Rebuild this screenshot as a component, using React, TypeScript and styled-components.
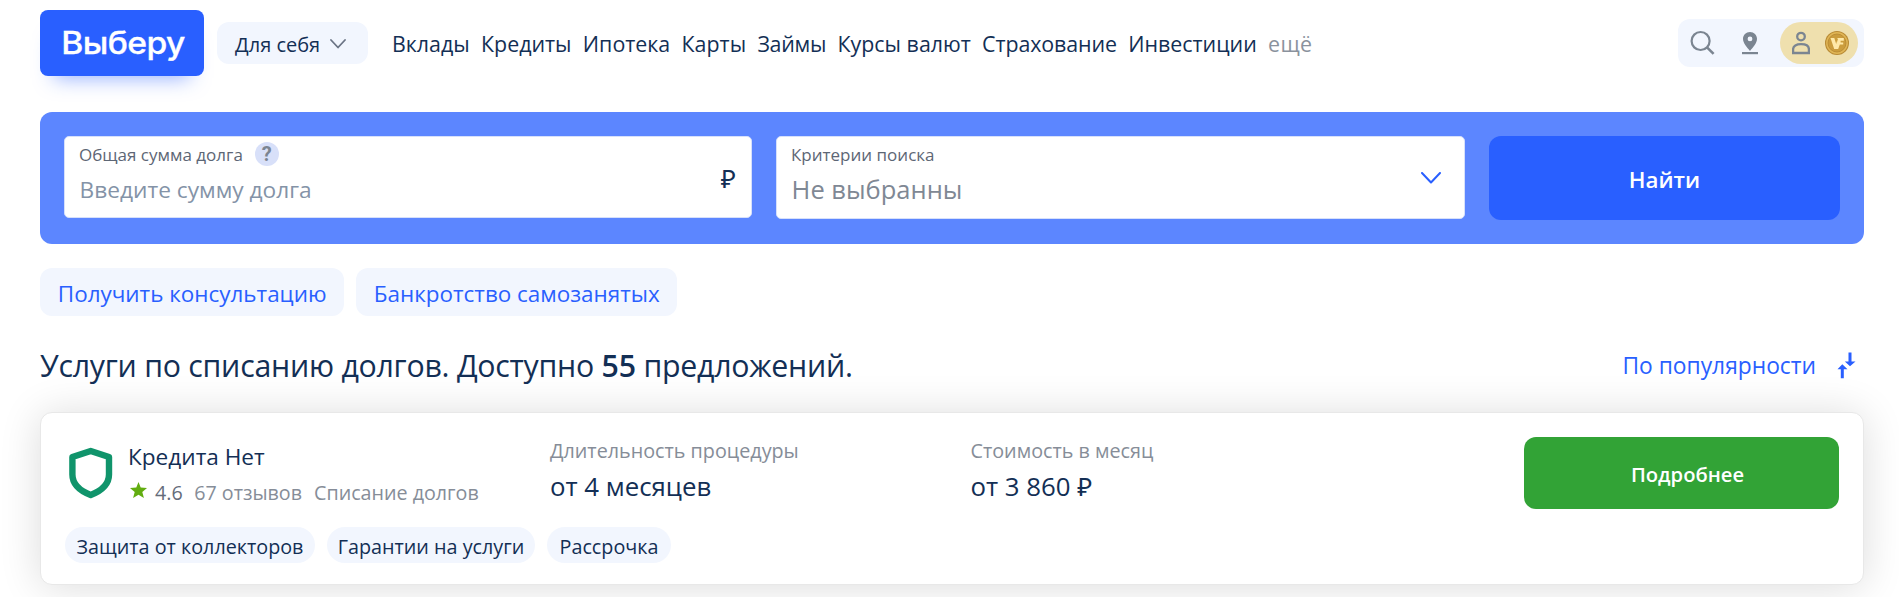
import React from 'react';
import styled, { createGlobalStyle } from 'styled-components';

const GlobalStyle = createGlobalStyle`
  *, *::before, *::after { box-sizing: border-box; }
  html, body { margin: 0; background: #fff; overflow: hidden; }
  body { font-family: "Open Sans", "Noto Sans", sans-serif; color: #132f55; }
  button { font-family: inherit; border: 0; cursor: pointer; }
  a { text-decoration: none; color: inherit; }
  svg { display: block; flex: none; }
`;

const Page = styled.div`
  height: 597px;
  padding: 10px 35px 0 40px;
  overflow: hidden;
`;

const Header = styled.header`
  display: flex;
  align-items: flex-start;
  width: 1824px;
  height: 102px;
`;

const Logo = styled.a`
  display: flex;
  align-items: center;
  justify-content: center;
  width: 164px;
  height: 66px;
  border-radius: 8px;
  background: #295fff;
  box-shadow: 0 16px 20px -14px rgba(41, 95, 255, 0.5);
  color: #fff;
`;

const LogoText = styled.span`
  font: 500 31px/40px Inter, sans-serif;
  letter-spacing: -0.5px;
  -webkit-text-stroke: 0.3px #fff;
  transform: scaleX(1.085);
  margin: -1px 0 0 2px;
`;

const Audience = styled.button`
  display: flex;
  align-items: center;
  gap: 10px;
  width: 151px;
  height: 42px;
  margin: 12px 0 0 13px;
  padding: 2px 0 0 18px;
  border-radius: 12px;
  background: #f2f6fe;
  color: #132f55;
  font-size: 20px;
`;

const Nav = styled.nav`
  display: flex;
  gap: 11.3px;
  margin: 14px 0 0 24px;
`;

const NavLink = styled.a<{ $muted?: boolean; $track?: number }>`
  font-size: 21.4px;
  line-height: 40px;
  white-space: nowrap;
  letter-spacing: ${(p) => p.$track ?? 0}px;
  color: ${(p) => (p.$muted ? '#8a929d' : '#132f55')};
`;

const UserTools = styled.div`
  display: flex;
  align-items: center;
  width: 186px;
  height: 48px;
  margin: 9px 0 0 auto;
  padding: 0 6px 0 12px;
  border-radius: 12px;
  background: #f2f6fe;
`;

const PinSlot = styled.span`
  margin-left: 26px;
`;

const Account = styled.div`
  display: flex;
  align-items: center;
  gap: 15px;
  width: 78px;
  height: 42px;
  margin-left: auto;
  padding-left: 12px;
  border-radius: 21px;
  background: #efe0ae;
`;

const SearchPanel = styled.section`
  display: flex;
  align-items: flex-start;
  gap: 24px;
  width: 1824px;
  height: 132px;
  padding: 24px;
  border-radius: 12px;
  background: #5c86ff;
`;

const Field = styled.div<{ $width: number; $height: number }>`
  display: flex;
  justify-content: space-between;
  align-items: center;
  width: ${(p) => p.$width}px;
  height: ${(p) => p.$height}px;
  border: 1px solid #d6e0fb;
  border-radius: 5px;
  background: #fff;
`;

const FieldBody = styled.div`
  align-self: flex-start;
  padding: 5px 0 0 14px;
`;

const FieldLabel = styled.div`
  display: flex;
  align-items: center;
  gap: 12px;
  height: 24px;
  font-size: 17px;
  color: #5d6675;
`;

const Help = styled.span`
  display: flex;
  align-items: center;
  justify-content: center;
  width: 24px;
  height: 24px;
  border-radius: 50%;
  background: #d8e0f9;
  color: #7b8591;
  font: 700 20px/24px Roboto, sans-serif;
`;

const FieldValue = styled.div<{ $size: number; $color: string; $top: number }>`
  margin-top: ${(p) => p.$top}px;
  padding-left: 0.6px;
  font-size: ${(p) => p.$size}px;
  line-height: 34px;
  color: ${(p) => p.$color};
`;

const Currency = styled.span`
  margin: 1px 15px 0 0;
  font-size: 26px;
  line-height: 34px;
`;

const ChevronSlot = styled.span`
  margin-right: 23px;
`;

const FindButton = styled.button`
  width: 351px;
  height: 84px;
  padding: 3px 0 0;
  border-radius: 12px;
  background: #295fff;
  color: #fff;
  font-size: 22.3px;
  font-weight: 600;
`;

const Shortcuts = styled.div`
  display: flex;
  gap: 12px;
  margin-top: 24px;
`;

const Shortcut = styled.a<{ $width: number }>`
  display: flex;
  align-items: center;
  width: ${(p) => p.$width}px;
  height: 48px;
  padding: 2px 0 0 17.8px;
  border-radius: 12px;
  background: #f2f6fe;
  color: #295fff;
  font-size: 22.45px;
  white-space: nowrap;
`;

const ListHeader = styled.div`
  display: flex;
  justify-content: space-between;
  align-items: center;
  width: 1824px;
  height: 40px;
  margin-top: 29px;
`;

const Title = styled.h1`
  margin: 1px 0 0;
  font-size: 30.3px;
  font-weight: 400;
  line-height: 40px;
  letter-spacing: -0.25px;

  b { font-weight: 600; }
`;

const Sort = styled.a`
  display: flex;
  align-items: center;
  gap: 21px;
  margin-right: 8px;
  color: #295fff;
  font-size: 22.8px;
`;

const Card = styled.article`
  width: 1824px;
  height: 173px;
  margin-top: 27px;
  padding: 24px;
  border: 1px solid #e8e8e8;
  border-radius: 12px;
  background: #fff;
  box-shadow: 0 2px 42px rgba(0, 0, 0, 0.14);
`;

const CardRow = styled.div`
  display: flex;
  align-items: flex-start;
  height: 90px;
`;

const Provider = styled.div`
  display: flex;
  gap: 15px;
  width: 485px;
  padding-left: 4px;
`;

const ShieldSlot = styled.span`
  padding-top: 10px;
`;

const ProviderInfo = styled.div`
  padding-top: 3px;
`;

const ProviderName = styled.div`
  font-size: 22.6px;
  line-height: 34px;
`;

const Rating = styled.div`
  display: flex;
  align-items: center;
  height: 30px;
  margin: 3px 0 0 2px;
  font-size: 19.7px;
  color: #868d98;
  white-space: nowrap;
`;

const Score = styled.span`
  margin: 0 11.5px 0 8px;
  color: #646c7a;
`;

const Reviews = styled.span`
  margin-right: 12px;
`;

const Term = styled.div`
  width: 420.5px;
`;

const TermLabel = styled.div`
  font-size: 19.75px;
  line-height: 27px;
  color: #868d98;
`;

const TermValue = styled.div`
  margin-top: 5px;
  font-size: 25.8px;
  line-height: 34px;
`;

const DetailsButton = styled.button`
  width: 315px;
  height: 72px;
  margin-left: auto;
  padding: 1px 0 0 12px;
  border-radius: 12px;
  background: #32a336;
  color: #fff;
  font-size: 20.2px;
  font-weight: 600;
`;

const Tags = styled.div`
  display: flex;
  gap: 12px;
`;

const Tag = styled.span<{ $width: number }>`
  display: flex;
  align-items: center;
  justify-content: center;
  width: ${(p) => p.$width}px;
  height: 36px;
  padding-top: 2px;
  border-radius: 18px;
  background: #f2f6fe;
  font-size: 19.75px;
  white-space: nowrap;
`;

const navItems: { label: string; track?: number; muted?: boolean }[] = [
  { label: 'Вклады' },
  { label: 'Кредиты' },
  { label: 'Ипотека' },
  { label: 'Карты' },
  { label: 'Займы', track: -0.25 },
  { label: 'Курсы валют' },
  { label: 'Страхование', track: -0.1 },
  { label: 'Инвестиции' },
  { label: 'ещё', muted: true, track: 0.3 },
];

const Chevron = ({ w, h, color, stroke }: { w: number; h: number; color: string; stroke: number }) => (
  <svg width={w} height={h} viewBox={`0 0 ${w} ${h}`} fill="none" stroke={color} strokeWidth={stroke}>
    <path d={`M1 1 L${w / 2} ${h - 1.5} L${w - 1} 1`} strokeLinecap="round" strokeLinejoin="round" />
  </svg>
);

const SearchIcon = () => (
  <svg width="26" height="26" viewBox="0 0 26 26" fill="none" stroke="#7b8591" strokeWidth="2.2">
    <circle cx="10.6" cy="11" r="9" />
    <path d="M17 17.4 L23.6 23.9" strokeWidth="2.6" />
  </svg>
);

const PinIcon = () => (
  <svg width="16" height="24" viewBox="0 0 16 24" fill="#7b8591">
    <path
      fillRule="evenodd"
      d="M8 1C4 1 1 4 1 7.8C1 12.3 5.2 16.6 8 19.9C10.8 16.6 15 12.3 15 7.8C15 4 12 1 8 1ZM8 5.5A2.4 2.4 0 1 1 8 10.3A2.4 2.4 0 0 1 8 5.5Z"
    />
    <rect y="21" width="16" height="2.2" />
  </svg>
);

const UserIcon = () => (
  <svg width="18" height="24" viewBox="0 0 18 24" fill="none" stroke="#7b8591" strokeWidth="2.3">
    <circle cx="9" cy="5.6" r="3.8" />
    <path d="M1.1 22V18.2C1.1 15 4.4 13.2 9 13.2S16.9 15 16.9 18.2V22Z" />
  </svg>
);

const CoinIcon = () => (
  <svg width="24" height="24" viewBox="0 0 24 24">
    <circle cx="12" cy="12" r="12" fill="#b88a34" />
    <circle cx="12" cy="12" r="10.9" fill="#e0b656" />
    <circle cx="12" cy="12" r="9" fill="#cb9d3d" stroke="#b98a33" strokeWidth="0.9" />
    <path d="M5.5 7H9.3L11.2 13L12.6 7H18.8V9.8H15.6V11.4H18.2V13.6H14.8L13.2 18H9.2Z" fill="#ffe9a8" />
    <path d="M10.8 8L11.9 11.6L12.9 8Z" fill="#cb9d3d" />
  </svg>
);

const SortIcon = () => (
  <svg width="19" height="27" viewBox="0 0 19 27" fill="#295fff">
    <path d="M11.5 0.5H14.5V9.5H18.5L13 14.3L7.8 9.5H11.5Z" />
    <path d="M3.8 26.3H6.8V17.2H10.5L5.3 12.2L0.5 17.2H3.8Z" />
  </svg>
);

const ShieldIcon = () => (
  <svg width="44" height="52" viewBox="0 0 44 52" fill="none" stroke="#10946b" strokeWidth="6.4">
    <path
      d="M21.7 4L40 10V27.5C40 37 33 43.6 21.7 48C10.4 43.6 3.4 37 3.4 27.5V10Z"
      strokeLinejoin="round"
    />
  </svg>
);

const StarIcon = () => (
  <svg width="17" height="16" viewBox="0 0 17 16" fill="#62ad10">
    <path d="M8.5 0L10.7 5.5L17 6L12.3 9.9L13.9 16L8.5 12.7L3.1 16L4.7 9.9L0 6L6.3 5.5Z" />
  </svg>
);

const StarSlot = styled.span`
  margin-top: -5px;
`;

export default function App() {
  return (
    <>
      <GlobalStyle />
      <Page>
        <Header>
          <Logo href="#">
            <LogoText>Выберу</LogoText>
          </Logo>
          <Audience>
            Для себя
            <Chevron w={16} h={10} color="#6b7485" stroke={1.8} />
          </Audience>
          <Nav>
            {navItems.map((item) => (
              <NavLink key={item.label} href="#" $muted={item.muted} $track={item.track}>
                {item.label}
              </NavLink>
            ))}
          </Nav>
          <UserTools>
            <SearchIcon />
            <PinSlot>
              <PinIcon />
            </PinSlot>
            <Account>
              <UserIcon />
              <CoinIcon />
            </Account>
          </UserTools>
        </Header>

        <SearchPanel>
          <Field $width={688} $height={82}>
            <FieldBody>
              <FieldLabel>
                Общая сумма долга
                <Help>?</Help>
              </FieldLabel>
              <FieldValue $size={22.7} $color="#8493a7" $top={7}>Введите сумму долга</FieldValue>
            </FieldBody>
            <Currency>₽</Currency>
          </Field>
          <Field $width={689} $height={83}>
            <FieldBody>
              <FieldLabel>Критерии поиска</FieldLabel>
              <FieldValue $size={25.5} $color="#7f8894" $top={6}>Не выбранны</FieldValue>
            </FieldBody>
            <ChevronSlot>
              <Chevron w={20} h={12} color="#295fff" stroke={2} />
            </ChevronSlot>
          </Field>
          <FindButton>Найти</FindButton>
        </SearchPanel>

        <Shortcuts>
          <Shortcut href="#" $width={304}>Получить консультацию</Shortcut>
          <Shortcut href="#" $width={321}>Банкротство самозанятых</Shortcut>
        </Shortcuts>

        <ListHeader>
          <Title>
            Услуги по списанию долгов. Доступно <b>55</b> предложений.
          </Title>
          <Sort href="#">
            По популярности
            <SortIcon />
          </Sort>
        </ListHeader>

        <Card>
          <CardRow>
            <Provider>
              <ShieldSlot>
                <ShieldIcon />
              </ShieldSlot>
              <ProviderInfo>
                <ProviderName>Кредита Нет</ProviderName>
                <Rating>
                  <StarSlot>
                    <StarIcon />
                  </StarSlot>
                  <Score>4.6</Score>
                  <Reviews>67 отзывов</Reviews>
                  <span>Списание долгов</span>
                </Rating>
              </ProviderInfo>
            </Provider>
            <Term>
              <TermLabel>Длительность процедуры</TermLabel>
              <TermValue>от 4 месяцев</TermValue>
            </Term>
            <Term>
              <TermLabel>Стоимость в месяц</TermLabel>
              <TermValue>от 3 860 ₽</TermValue>
            </Term>
            <DetailsButton>Подробнее</DetailsButton>
          </CardRow>
          <Tags>
            <Tag $width={250}>Защита от коллекторов</Tag>
            <Tag $width={208}>Гарантии на услуги</Tag>
            <Tag $width={124}>Рассрочка</Tag>
          </Tags>
        </Card>
      </Page>
    </>
  );
}
